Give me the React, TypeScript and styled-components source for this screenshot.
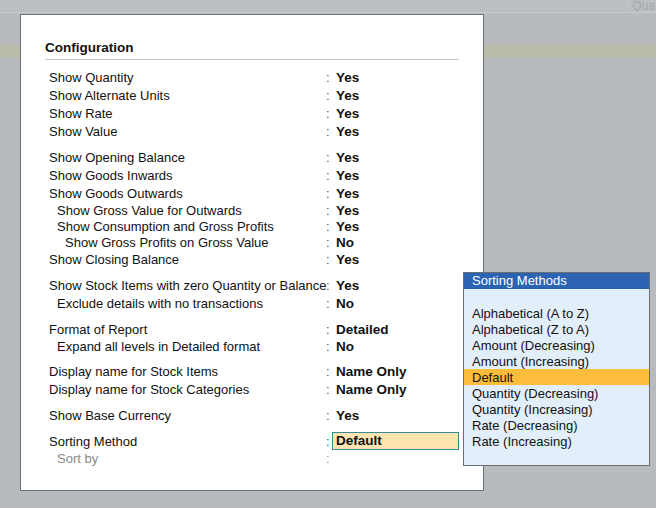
import React from "react";
import styled, { createGlobalStyle } from "styled-components";

const Global = createGlobalStyle`
  html, body { margin: 0; padding: 0; }
  body { font-family: "Liberation Sans", Arial, sans-serif; }
  #root { width: 656px; height: 508px; overflow: hidden; }
`;

const Screen = styled.div`
  position: relative;
  width: 656px;
  height: 508px;
  background: #b8bbbe;
  display: flex;
  flex-direction: column;
  overflow: hidden;
`;

const TopStrip = styled.div`
  height: 12px;
  background: #bcbfc2;
  border-bottom: 1px solid #c9cccf;
  display: flex;
  justify-content: flex-end;
  align-items: center;
  font-size: 12px;
  color: #a3a7aa;
  overflow: hidden;
`;

const TopLabel = styled.span`
  white-space: nowrap;
  border-left: 1px solid #c4c7ca;
  padding-left: 3px;
  padding-right: 1px;
`;

const Spacer = styled.div<{ $h: number }>`
  height: ${(p) => p.$h}px;
`;

const Band = styled.div`
  height: 14px;
  background: linear-gradient(#b9bbb2, #bcbca9 50%, #b9bbb0);
`;

const Panel = styled.div`
  position: absolute;
  left: 20px;
  top: 14px;
  width: 464px;
  height: 477px;
  box-sizing: border-box;
  background: #ffffff;
  border: 1px solid #6f7275;
  padding: 25px 24px 0 24px;
`;

const Title = styled.div`
  font-weight: bold;
  font-size: 13.5px;
  line-height: 16px;
  color: #111;
  padding-bottom: 3px;
  border-bottom: 1px solid #c6c6c6;
  width: 414px;
`;

const Rows = styled.div`
  padding-top: 8px;
  padding-left: 4px;
  display: flex;
  flex-direction: column;
`;

const Group = styled.div`
  display: flex;
  flex-direction: column;
  & + & {
    margin-top: 8px;
  }
`;

const Row = styled.div<{ $h: number }>`
  display: grid;
  grid-template-columns: 277px 10px 1fr;
  height: ${(p) => p.$h}px;
  align-items: center;
  font-size: 13px;
  color: #111;
`;

const Label = styled.span<{ $level: number; $dim?: boolean }>`
  padding-left: ${(p) => p.$level * 8}px;
  color: ${(p) => (p.$dim ? "#8a8a8a" : "#111")};
  white-space: nowrap;
`;

const Colon = styled.span<{ $dim?: boolean }>`
  color: ${(p) => (p.$dim ? "#a0a0a0" : "#555")};
`;

const Value = styled.span<{ $active?: boolean }>`
  font-weight: bold;
  font-size: 13.5px;
  color: #111;
  white-space: nowrap;
  ${(p) =>
    p.$active
      ? `
    margin-left: -4px;
    padding-left: 3px;
    width: 127px;
    height: 18px;
    line-height: 16px;
    box-sizing: border-box;
    background: #fee4ae;
    border: 1px solid #3a8796;
  `
      : ""}
`;

const Popup = styled.div`
  position: absolute;
  left: 463px;
  top: 272px;
  width: 187px;
  height: 194px;
  box-sizing: border-box;
  background: #e2eef9;
  border: 1px solid #6a6d70;
  display: flex;
  flex-direction: column;
`;

const PopupHeader = styled.div`
  height: 16px;
  line-height: 16px;
  background: #2c64b3;
  color: #ffffff;
  font-size: 13px;
  padding-left: 8px;
`;

const PopupList = styled.div`
  padding-top: 16px;
  display: flex;
  flex-direction: column;
`;

const Item = styled.div<{ $selected?: boolean }>`
  height: 16px;
  line-height: 17px;
  font-size: 13px;
  color: #111;
  padding-left: 8px;
  background: ${(p) => (p.$selected ? "#fbbd3b" : "transparent")};
`;

type R = { label: string; value?: string; level?: number; h?: number; dim?: boolean; active?: boolean };

const groups: R[][] = [
  [
    { label: "Show Quantity", value: "Yes" },
    { label: "Show Alternate Units", value: "Yes" },
    { label: "Show Rate", value: "Yes" },
    { label: "Show Value", value: "Yes" },
  ],
  [
    { label: "Show Opening Balance", value: "Yes" },
    { label: "Show Goods Inwards", value: "Yes" },
    { label: "Show Goods Outwards", value: "Yes" },
    { label: "Show Gross Value for Outwards", value: "Yes", level: 1, h: 16 },
    { label: "Show Consumption and Gross Profits", value: "Yes", level: 1, h: 16 },
    { label: "Show Gross Profits on Gross Value", value: "No", level: 2, h: 16 },
    { label: "Show Closing Balance", value: "Yes" },
  ],
  [
    { label: "Show Stock Items with zero Quantity or Balance", value: "Yes" },
    { label: "Exclude details with no transactions", value: "No", level: 1 },
  ],
  [
    { label: "Format of Report", value: "Detailed" },
    { label: "Expand all levels in Detailed format", value: "No", level: 1, h: 16 },
  ],
  [
    { label: "Display name for Stock Items", value: "Name Only" },
    { label: "Display name for Stock Categories", value: "Name Only" },
  ],
  [{ label: "Show Base Currency", value: "Yes" }],
  [
    { label: "Sorting Method", value: "Default", active: true },
    { label: "Sort by", level: 1, h: 16, dim: true },
  ],
];

const methods = [
  "Alphabetical (A to Z)",
  "Alphabetical (Z to A)",
  "Amount (Decreasing)",
  "Amount (Increasing)",
  "Default",
  "Quantity (Decreasing)",
  "Quantity (Increasing)",
  "Rate (Decreasing)",
  "Rate (Increasing)",
];

export default function App() {
  return (
    <Screen>
      <Global />
      <TopStrip>
        <TopLabel>Qua</TopLabel>
      </TopStrip>
      <Spacer $h={31} />
      <Band />
      <Panel>
        <Title>Configuration</Title>
        <Rows>
          {groups.map((g, gi) => (
            <Group key={gi}>
              {g.map((r) => (
                <Row key={r.label} $h={r.h ?? 18}>
                  <Label $level={r.level ?? 0} $dim={r.dim}>
                    {r.label}
                  </Label>
                  <Colon $dim={r.dim}>:</Colon>
                  {r.value ? <Value $active={r.active}>{r.value}</Value> : <span />}
                </Row>
              ))}
            </Group>
          ))}
        </Rows>
      </Panel>
      <Popup>
        <PopupHeader>Sorting Methods</PopupHeader>
        <PopupList>
          {methods.map((m) => (
            <Item key={m} $selected={m === "Default"}>
              {m}
            </Item>
          ))}
        </PopupList>
      </Popup>
    </Screen>
  );
}
